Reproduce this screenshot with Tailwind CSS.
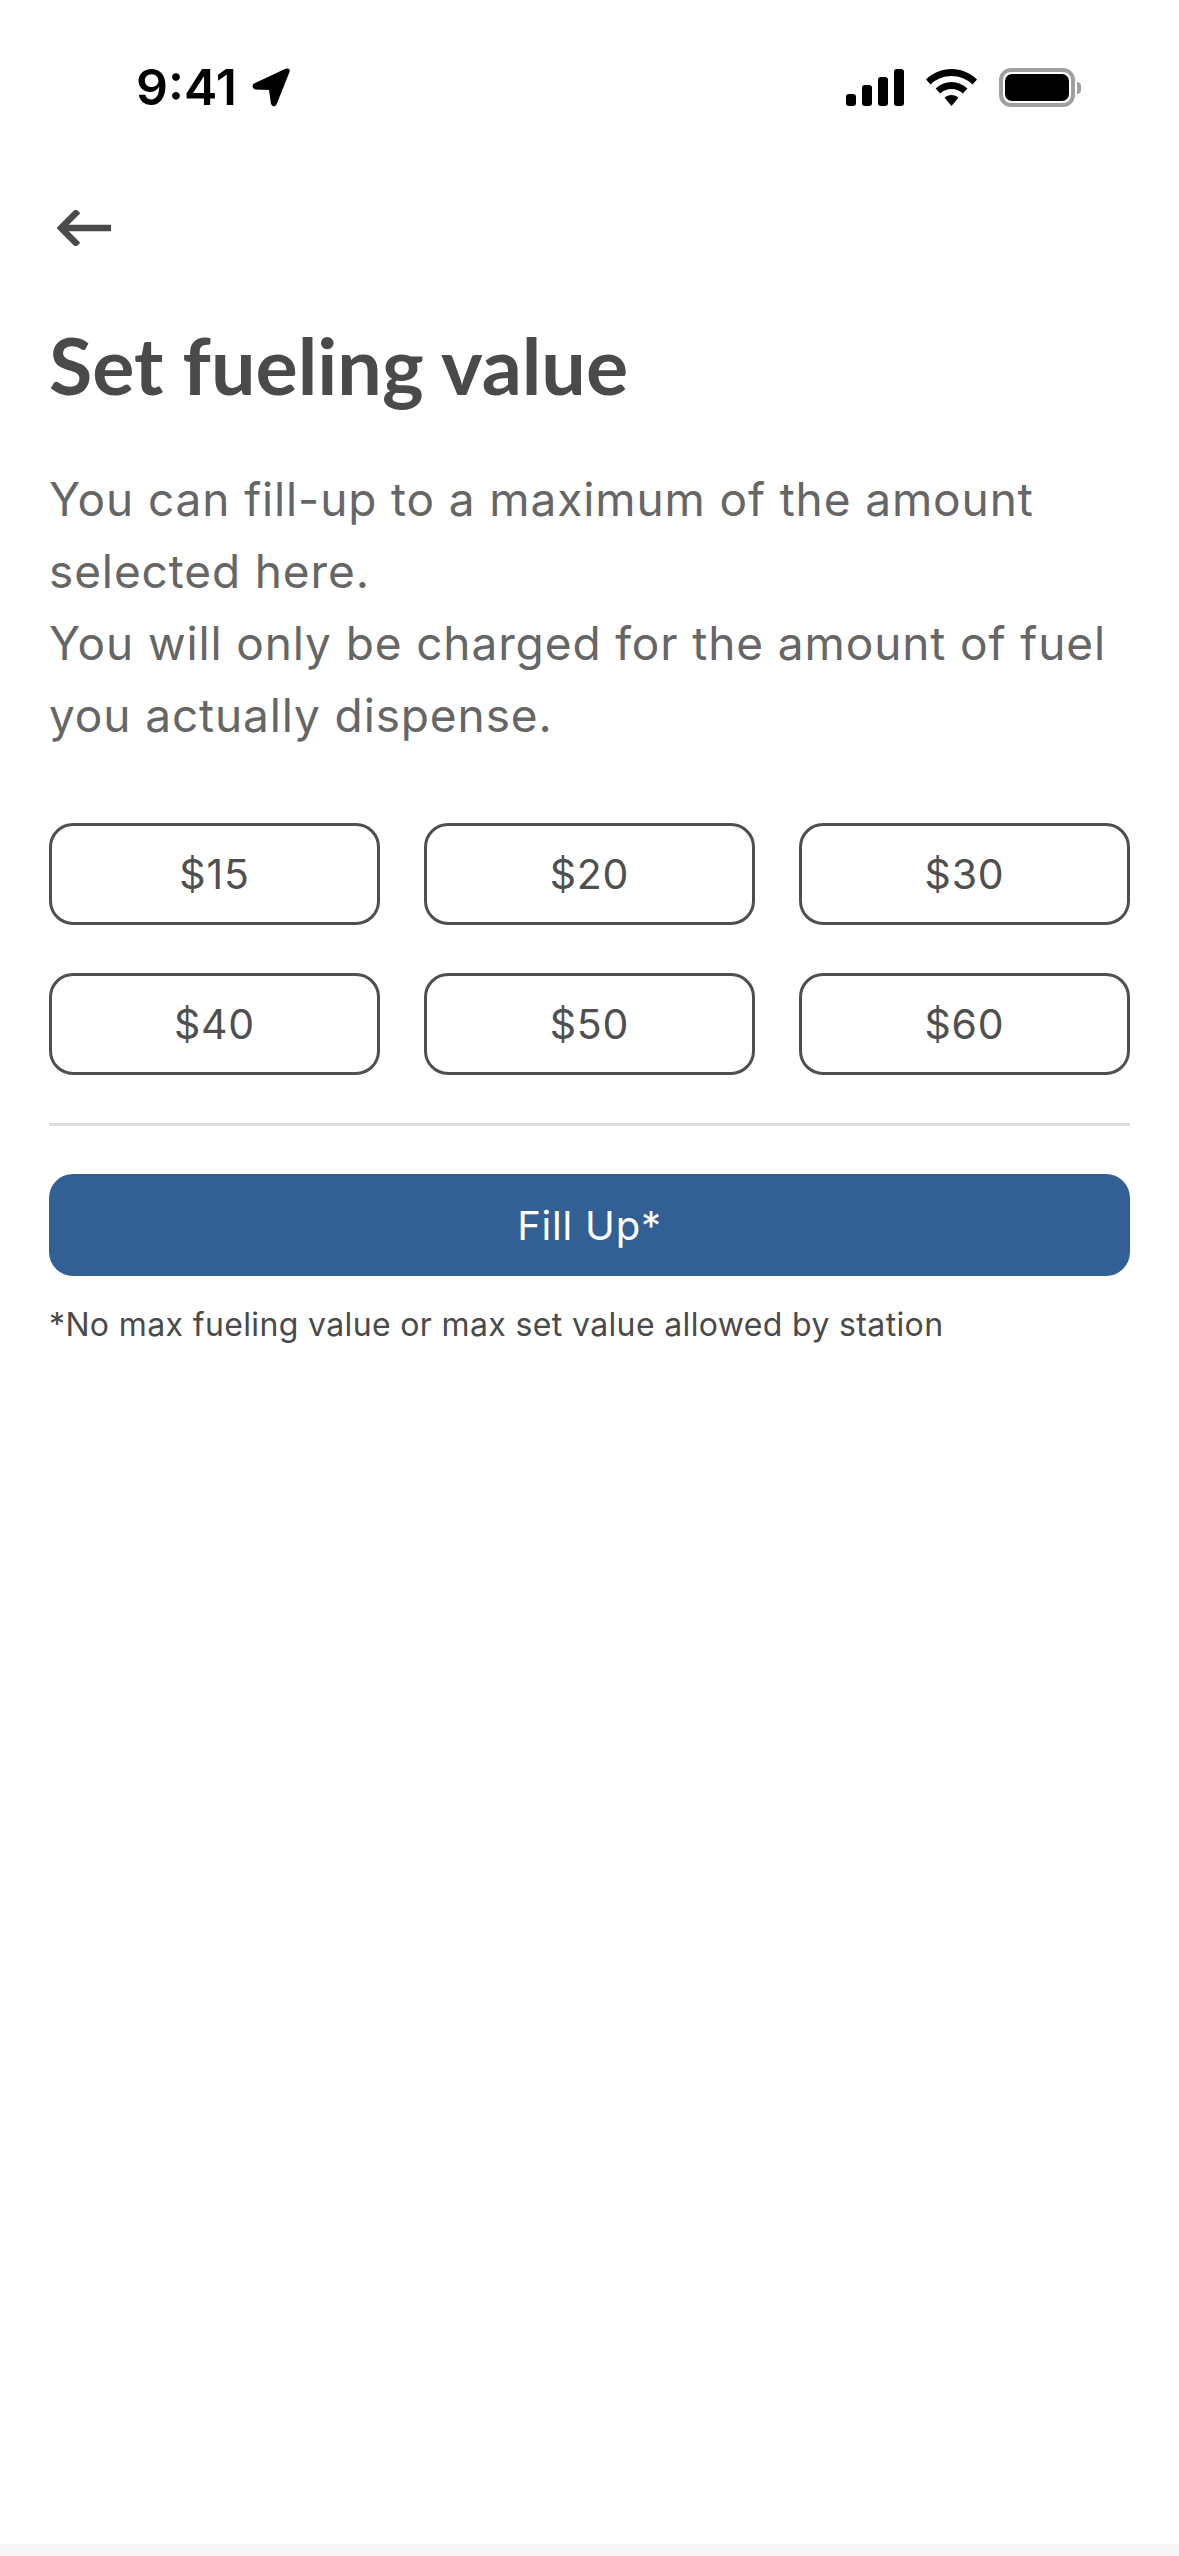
<!DOCTYPE html>
<html lang="en">
<head>
    <meta charset="UTF-8">
    <meta name="viewport" content="width=device-width, initial-scale=1.0">
    <title>Set fueling value</title>
    <script src="https://cdn.jsdelivr.net/npm/@tailwindcss/browser@4"></script>
</head>
<body class="bg-white font-['Inter',sans-serif]">
    <div class="w-[1179px] h-[2556px] flex flex-col overflow-hidden">
        <!-- Status bar -->
        <div class="h-[210px] shrink-0 pt-[68px] pl-[136px] pr-[98px] flex justify-between items-start">
            <div class="flex items-center h-[39px]">
                <span class="text-[50px] leading-[39px] font-semibold text-black">9:41</span>
                <svg class="ml-[15px] w-[38px] h-[39px]" viewBox="0 0 38 39">
                    <path d="M2 15.5 L33.5 0.8 Q38.5 -0.8 37.5 4 L24.5 36.5 Q21.5 40.5 19 36 L17 22 L3 21.5 Q-1.5 18.5 2 15.5Z" fill="#000"/>
                </svg>
            </div>
            <div class="flex items-center h-[39px]">
                <svg class="w-[58px] h-[37px]" viewBox="0 0 58 37">
                    <rect x="0" y="25" width="10" height="12" rx="3" fill="#000"/>
                    <rect x="16" y="16" width="10" height="21" rx="3" fill="#000"/>
                    <rect x="32" y="8" width="10" height="29" rx="3" fill="#000"/>
                    <rect x="48" y="0" width="10" height="37" rx="3" fill="#000"/>
                </svg>
                <svg class="ml-[22px] w-[51px] h-[37px]" viewBox="0 0 51 37">
                    <path d="M25.5 0 C35 0 44 3.8 51 10.5 L46.5 15.5 C40.8 10 33.4 7 25.5 7 C17.6 7 10.2 10 4.5 15.5 L0 10.5 C7 3.8 16 0 25.5 0Z" fill="#000"/>
                    <path d="M25.5 13 C31.5 13 37 15.3 41.4 19.4 L36.8 24.4 C33.8 21.6 29.8 20 25.5 20 C21.2 20 17.2 21.6 14.2 24.4 L9.6 19.4 C14 15.3 19.5 13 25.5 13Z" fill="#000"/>
                    <path d="M25.5 26 C28.2 26 30.6 27 32.4 28.7 L25.5 37 L18.6 28.7 C20.4 27 22.8 26 25.5 26Z" fill="#000"/>
                </svg>
                <div class="ml-[22px] w-[76px] h-[39px] rounded-[12px] border-[4px] border-[#a0a0a0] p-[2px]">
                    <div class="w-full h-full rounded-[7px] bg-black"></div>
                </div>
                <div class="ml-[2px] w-[4px] h-[12px] rounded-r-[4px] bg-[#a0a0a0]"></div>
            </div>
        </div>

        <div class="flex-1 px-[49px]">
            <!-- Back -->
            <svg class="ml-[8px] w-[54px] h-[36px] block" viewBox="0 0 54 36" fill="none" stroke="#4a4a4a" stroke-width="6.5">
                <path d="M54 18 H4"/>
                <path d="M21 1 L4 18 L21 35"/>
            </svg>

            <h1 class="mt-[73px] text-[79px] leading-[92px] font-bold text-[#4a4a4a] font-['Lato',sans-serif]">Set fueling value</h1>

            <p class="mt-[52px] text-[46px] leading-[72px] text-[#666666] tracking-[0.88px]">
                You can fill-up to a maximum of the amount selected here.<br>
                You will only be charged for the amount of fuel you actually dispense.
            </p>

            <!-- Amounts -->
            <div class="mt-[72px] grid grid-cols-3 gap-x-[44px] gap-y-[48px]">
                <button class="h-[102px] pt-[2px] rounded-[24px] border-[3px] border-[#4f4f4f] text-[41px] tracking-[0.8px] text-[#4f4f4f]">$15</button>
                <button class="h-[102px] pt-[2px] rounded-[24px] border-[3px] border-[#4f4f4f] text-[41px] tracking-[0.8px] text-[#4f4f4f]">$20</button>
                <button class="h-[102px] pt-[2px] rounded-[24px] border-[3px] border-[#4f4f4f] text-[41px] tracking-[0.8px] text-[#4f4f4f]">$30</button>
                <button class="h-[102px] pt-[2px] rounded-[24px] border-[3px] border-[#4f4f4f] text-[41px] tracking-[0.8px] text-[#4f4f4f]">$40</button>
                <button class="h-[102px] pt-[2px] rounded-[24px] border-[3px] border-[#4f4f4f] text-[41px] tracking-[0.8px] text-[#4f4f4f]">$50</button>
                <button class="h-[102px] pt-[2px] rounded-[24px] border-[3px] border-[#4f4f4f] text-[41px] tracking-[0.8px] text-[#4f4f4f]">$60</button>
            </div>

            <div class="mt-[48px] h-[3px] bg-[#dddddd]"></div>

            <button class="mt-[48px] w-full h-[102px] pt-[2px] rounded-[24px] bg-[#336094] text-white text-[40px] tracking-[0.8px]">Fill Up*</button>

            <p class="mt-[27px] text-[32px] leading-[44px] text-[#4a4a4a] tracking-[0.36px]">*No max fueling value or max set value allowed by station</p>
        </div>

        <div class="h-[12px] shrink-0 bg-[#f6f6f6]"></div>
    </div>
</body>
</html>
